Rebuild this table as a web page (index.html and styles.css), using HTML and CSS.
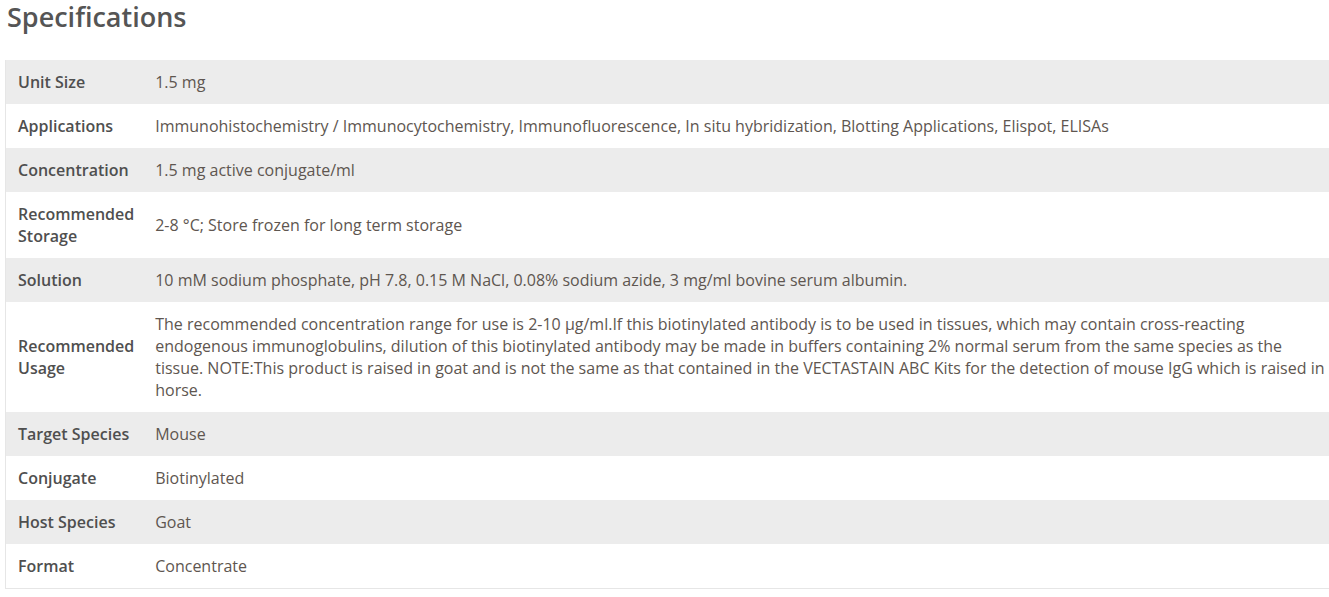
FILE: index.html
```html
<!DOCTYPE html>
<html>
<head>
<meta charset="utf-8">
<link rel="stylesheet" href="styles.css">
</head>
<body>
<div class="specs">
  <h2 class="specs-title">Specifications</h2>
  <table class="spec-table">
    <tbody>
      <tr><th>Unit Size</th><td>1.5 mg</td></tr>
      <tr><th>Applications</th><td>Immunohistochemistry / Immunocytochemistry, Immunofluorescence, In situ hybridization, Blotting Applications, Elispot, ELISAs</td></tr>
      <tr><th>Concentration</th><td>1.5 mg active conjugate/ml</td></tr>
      <tr><th>Recommended Storage</th><td>2-8 °C; Store frozen for long term storage</td></tr>
      <tr><th>Solution</th><td>10 mM sodium phosphate, pH 7.8, 0.15 M NaCl, 0.08% sodium azide, 3 mg/ml bovine serum albumin.</td></tr>
      <tr><th>Recommended Usage</th><td>The recommended concentration range for use is 2-10 µg/ml.If this biotinylated antibody is to be used in tissues, which may contain cross-reacting endogenous immunoglobulins, dilution of this biotinylated antibody may be made in buffers containing 2% normal serum from the same species as the tissue. NOTE:This product is raised in goat and is not the same as that contained in the VECTASTAIN ABC Kits for the detection of mouse IgG which is raised in horse.</td></tr>
      <tr><th>Target Species</th><td>Mouse</td></tr>
      <tr><th>Conjugate</th><td>Biotinylated</td></tr>
      <tr><th>Host Species</th><td>Goat</td></tr>
      <tr><th>Format</th><td>Concentrate</td></tr>
    </tbody>
  </table>
</div>
</body>
</html>
```
FILE: styles.css
```css
html, body {
  margin: 0;
  padding: 0;
  background: #fff;
  overflow-x: hidden;
}
body {
  font-family: "Open Sans", "Liberation Sans", sans-serif;
  color: #555;
}
.specs {
  padding-left: 5px;
  width: 1324px;
}
.specs-title {
  margin: 0;
  padding-left: 2px;
  font-size: 27px;
  font-weight: 600;
  line-height: 34px;
  color: #555;
}
.spec-table {
  margin-top: 26px;
  width: 100%;
  border-collapse: collapse;
  border: 1px solid #e6e6e6;
  border-top: none;
  border-right: none;
  font-size: 16px;
  line-height: 22px;
}
.spec-table tr:nth-child(odd) {
  background: #ececec;
}
.spec-table th,
.spec-table td {
  padding: 11px 12px;
  vertical-align: middle;
  text-align: left;
}
.spec-table th {
  width: 113px;
  padding-right: 9px;
  font-weight: 600;
  color: #4f4f4f;
}
.spec-table td {
  padding-left: 12px;
  padding-right: 0;
  font-weight: 400;
  color: #5e5650;
}
```
